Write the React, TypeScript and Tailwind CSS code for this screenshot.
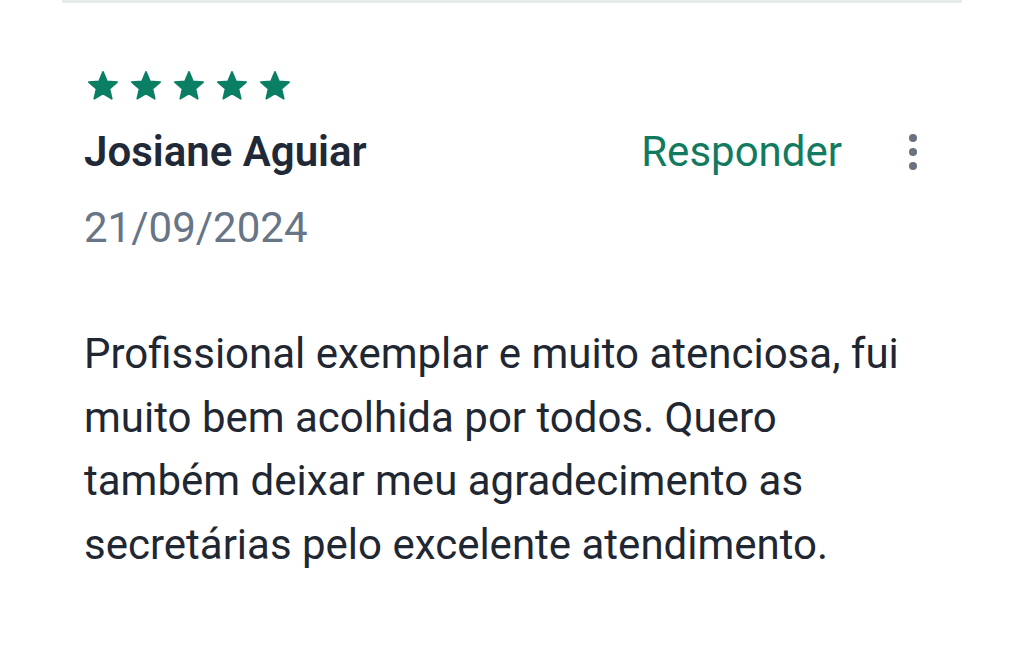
import React from 'react'

interface Review {
  author: string
  date: string
  rating: number
  lines: string[]
}

const review: Review = {
  author: 'Josiane Aguiar',
  date: '21/09/2024',
  rating: 5,
  lines: [
    'Profissional exemplar e muito atenciosa, fui',
    'muito bem acolhida por todos. Quero',
    'também deixar meu agradecimento as',
    'secretárias pelo excelente atendimento.',
  ],
}

const StarIcon = (): React.ReactNode => (
  <svg viewBox="0 0 24 24" className="h-[34px] w-[34px]" fill="#0a7f64" stroke="#0a7f64" strokeWidth="1.2" strokeLinejoin="round">
    <path d="M12 17.27L18.18 21l-1.64-7.03L22 9.24l-7.19-.61L12 2 9.19 8.63 2 9.24l5.46 4.73L5.82 21z" />
  </svg>
)

const KebabButton = (): React.ReactNode => (
  <button className="flex w-[8px] flex-col items-center gap-[6px]" aria-label="Mais opções">
    <span className="h-[8px] w-[8px] rounded-full bg-[#6b7280]" />
    <span className="h-[8px] w-[8px] rounded-full bg-[#6b7280]" />
    <span className="h-[8px] w-[8px] rounded-full bg-[#6b7280]" />
  </button>
)

const App = (): React.ReactNode => {
  return (
    <div className="h-[656px] w-full overflow-hidden bg-white font-['Roboto',sans-serif]">
      <div className="mx-[62px] h-[3px] bg-[#e6ebeb]" />
      <div className="pl-[84px] pr-[107px] pt-[66px]">
        <div className="ml-[2px] flex gap-[9px]">
          {Array.from({ length: review.rating }).map((_, index) => (
            <StarIcon key={index} />
          ))}
        </div>
        <div className="mt-[25px] flex items-center justify-between">
          <h3 className="text-[42px] font-semibold leading-[48px] text-[#1f2937]">{review.author}</h3>
          <div className="flex items-center gap-[67px]">
            <button className="text-[42px] leading-[48px] text-[#127a5e]">Responder</button>
            <KebabButton />
          </div>
        </div>
        <div className="mt-[28px] text-[42px] leading-[48px] text-[#677586]">{review.date}</div>
        <p className="mt-[70px] text-[42px] leading-[63.5px] text-[#1f2733]">
          {review.lines.map((line, index) => (
            <span key={index} className="block whitespace-nowrap">
              {line}
            </span>
          ))}
        </p>
      </div>
    </div>
  )
}

export default App
